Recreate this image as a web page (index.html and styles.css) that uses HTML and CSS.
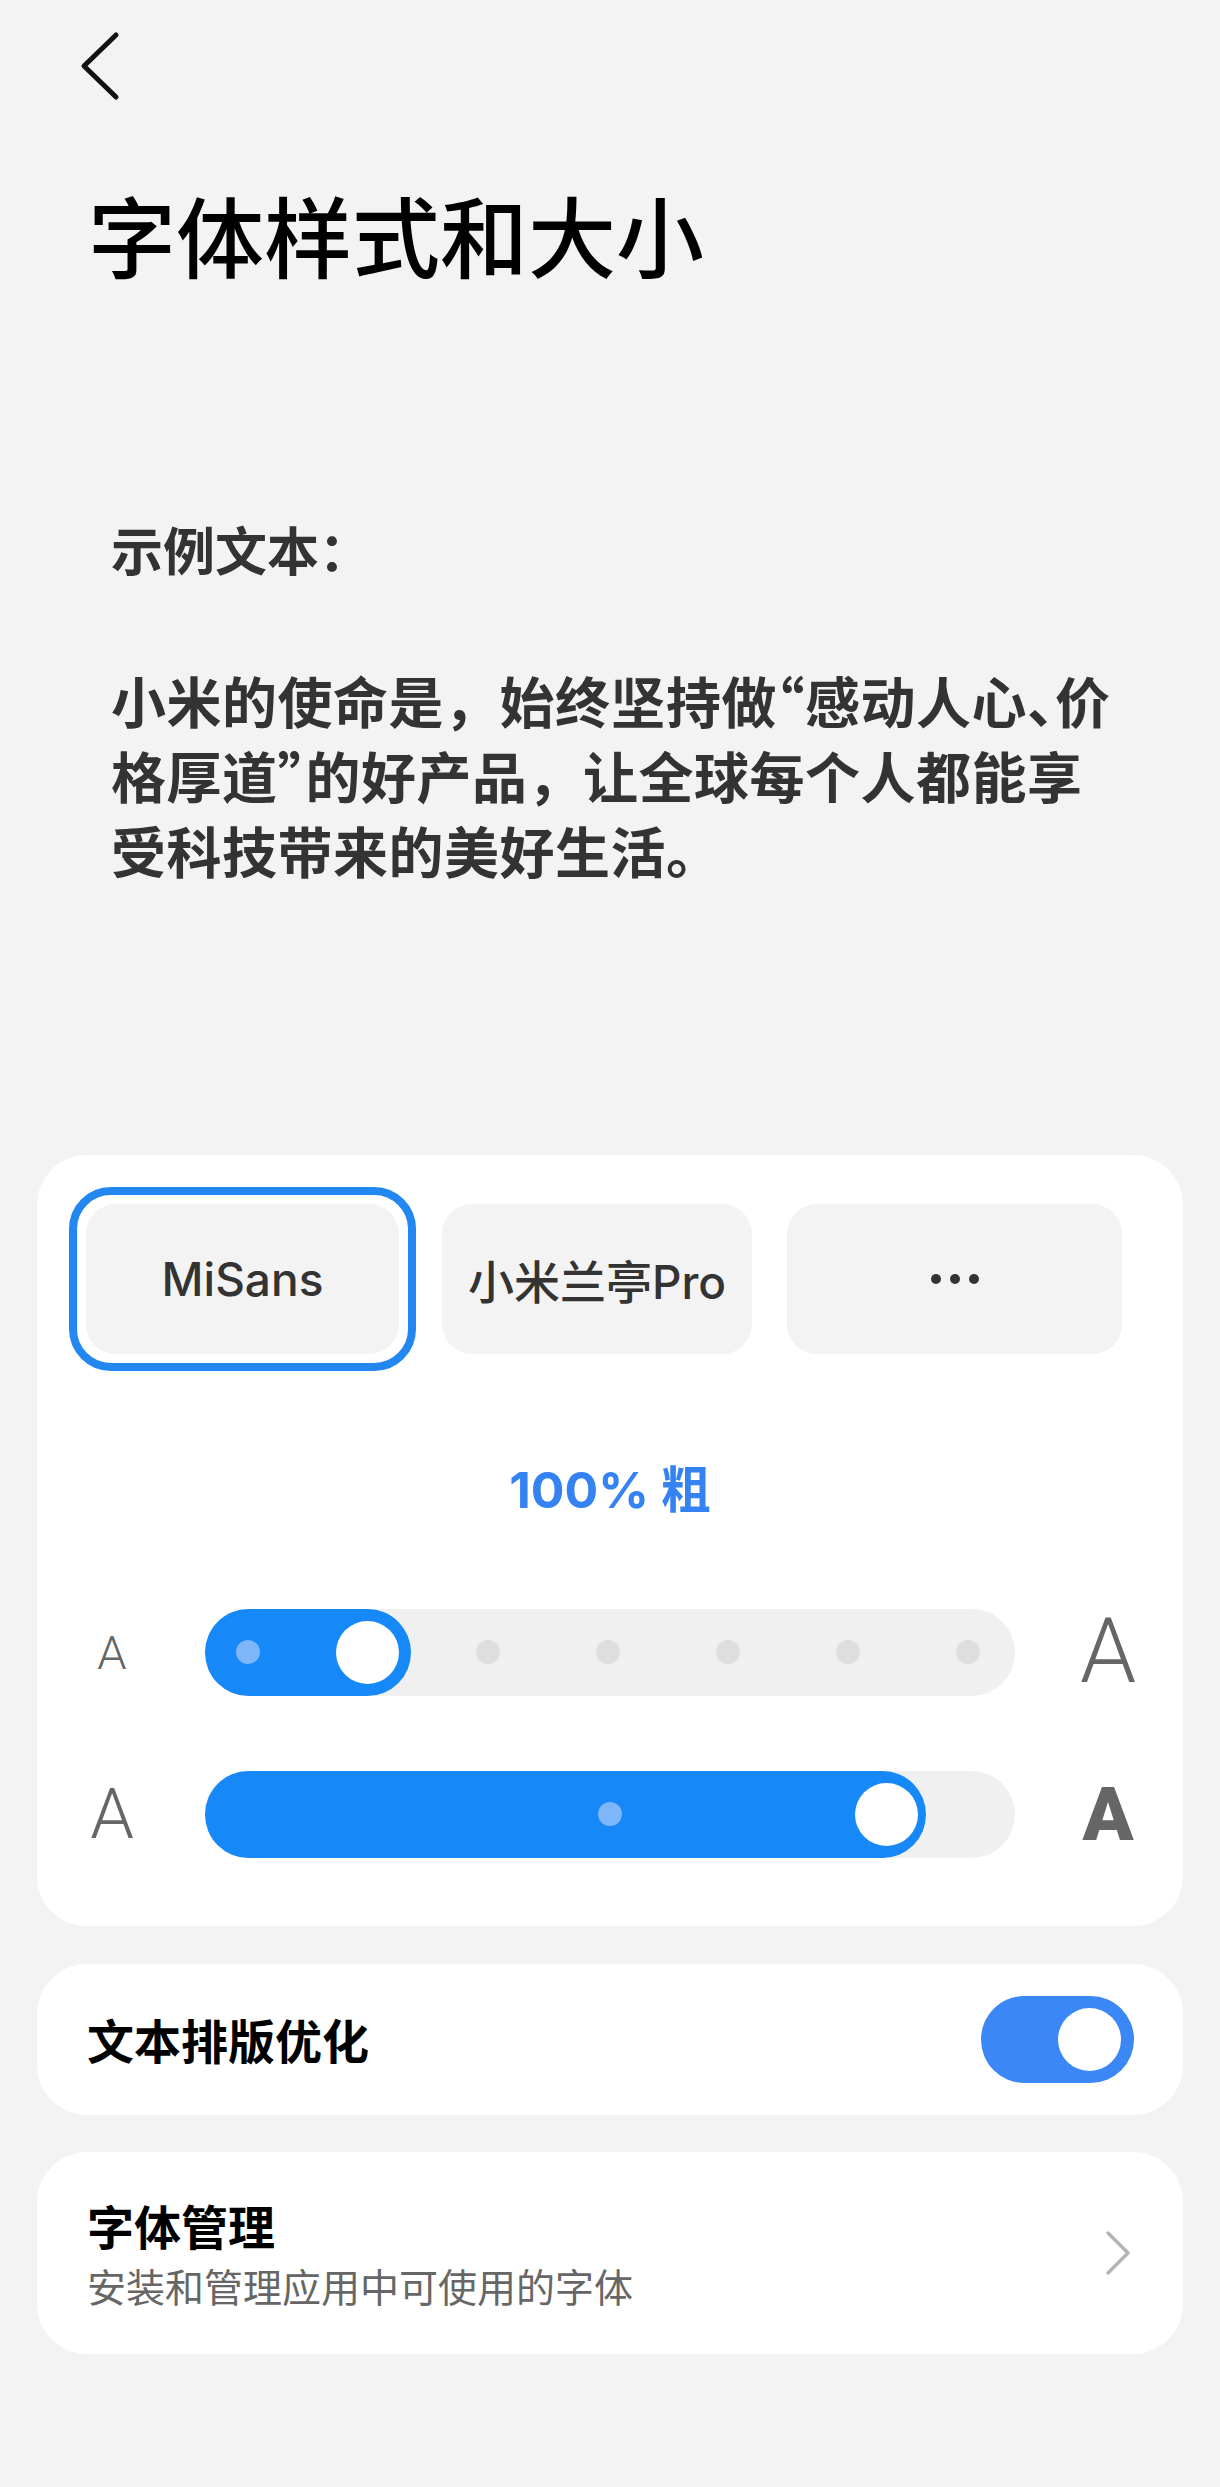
FILE: index.html
```html
<!DOCTYPE html>
<html lang="zh-CN">
<head>
    <meta charset="UTF-8">
    <meta name="viewport" content="width=device-width, initial-scale=1.0">
    <title>字体样式和大小</title>
    <link rel="stylesheet" href="styles.css">
</head>
<body>
    <!-- 顶部返回 -->
    <div class="topbar">
        <svg class="back" viewBox="0 0 42 72" width="42" height="72">
            <path d="M36 5 L4 36 L36 67" fill="none" stroke="#111" stroke-width="5" stroke-linecap="round" stroke-linejoin="round"/>
        </svg>
    </div>

    <h1 class="title">字体样式和大小</h1>

    <!-- 示例文本 -->
    <div class="sample">
        <div class="sample-label">示例文本<span class="half">：</span></div>
        <p class="sample-text">小米的使命是，始终坚持做<span class="half">“</span>感动人心<span class="half">、</span>价<br>格厚道<span class="half">”</span>的好产品，让全球每个人都能享<br>受科技带来的美好生活。</p>
    </div>

    <!-- 字体和大小设置 -->
    <div class="card font-card">
        <div class="chips">
            <div class="chip-ring">
                <div class="chip">MiSans</div>
            </div>
            <div class="chip chip-cn">小米兰亭Pro</div>
            <div class="chip chip-more">
                <span class="dot"></span><span class="dot"></span><span class="dot"></span>
            </div>
        </div>

        <div class="weight-label">100% 粗</div>

        <div class="slider-row">
            <span class="a-label a-s1">A</span>
            <div class="track">
                <div class="fill" style="width: 206px"></div>
                <div class="stops">
                    <span class="stop on"></span>
                    <span class="stop on"></span>
                    <span class="stop"></span>
                    <span class="stop"></span>
                    <span class="stop"></span>
                    <span class="stop"></span>
                    <span class="stop"></span>
                </div>
                <span class="knob" style="left: 131px"></span>
            </div>
            <span class="a-label a-l1">A</span>
        </div>

        <div class="slider-row second">
            <span class="a-label a-s2">A</span>
            <div class="track">
                <div class="fill" style="width: 721px"></div>
                <div class="stops center">
                    <span class="stop on"></span>
                </div>
                <span class="knob" style="left: 650px"></span>
            </div>
            <span class="a-label a-bold">A</span>
        </div>
    </div>

    <!-- 文本排版优化 -->
    <div class="card row-card toggle-card">
        <span class="row-title">文本排版优化</span>
        <div class="switch"><span class="switch-knob"></span></div>
    </div>

    <!-- 字体管理 -->
    <div class="card row-card manage-card">
        <div class="row-text">
            <div class="row-title">字体管理</div>
            <div class="row-sub">安装和管理应用中可使用的字体</div>
        </div>
        <svg class="arrow" viewBox="0 0 30 46" width="30" height="46">
            <path d="M5 3 L25 23 L5 43" fill="none" stroke="#b4b4b4" stroke-width="3.5" stroke-linecap="round" stroke-linejoin="round"/>
        </svg>
    </div>
</body>
</html>
```

FILE: styles.css
```css
body {
    margin: 0;
    min-height: 2487px;
    background: #f3f3f3;
    font-family: "Noto Sans CJK SC", sans-serif;
    color: #000;
}
.topbar {
    height: 72px;
    padding: 30px 0 0 80px;
}
.back {
    display: block;
}
.title {
    margin: 78px 0 0;
    padding-left: 88px;
    font-size: 88px;
    line-height: 1.2;
    font-weight: 500;
    color: #000;
}
.sample {
    margin-top: 232px;
    padding: 0 40px 0 111px;
    color: #333;
}
.half {
    font-feature-settings: "halt";
}
.sample-label {
    font-size: 52px;
    line-height: 62px;
    font-weight: 600;
}
.sample-text {
    margin: 82px 0 0;
    font-size: 55px;
    line-height: 75px;
    font-weight: 600;
    letter-spacing: 0.5px;
    white-space: nowrap;
}
.card {
    margin: 0 37px;
    background: #fff;
    border-radius: 50px;
}
.font-card {
    margin-top: 268px;
    padding: 32px 0 68px;
}
.chips {
    display: flex;
    align-items: center;
    padding-left: 32px;
    gap: 26px;
}
.chip-ring {
    border: 8px solid #2287f0;
    border-radius: 42px;
    padding: 9px;
}
.chip {
    width: 313px;
    height: 150px;
    background: #f3f3f3;
    border-radius: 30px;
    display: flex;
    align-items: center;
    justify-content: center;
    font-family: "Inter", "Noto Sans CJK SC", sans-serif;
    font-size: 46px;
    font-weight: 500;
    color: #333;
}
.chip-cn {
    width: 310px;
    font-size: 46px;
}
.chip-more {
    width: 335px;
    margin-left: 9px;
    gap: 9px;
}
.chip-more .dot {
    width: 10px;
    height: 10px;
    border-radius: 50%;
    background: #333;
}
.weight-label {
    margin-top: 88px;
    text-align: center;
    font-family: "Inter", "Noto Sans CJK SC", sans-serif;
    font-size: 50px;
    line-height: 62px;
    font-weight: 700;
    color: #3583f2;
}
.slider-row {
    display: flex;
    align-items: center;
    height: 87px;
    margin-top: 88px;
    gap: 18px;
}
.slider-row.second {
    margin-top: 75px;
}
.a-label {
    width: 150px;
    text-align: center;
    font-family: "Roboto", sans-serif;
    font-weight: 300;
    line-height: 1;
    color: #666;
}
.a-s1 {
    font-size: 47px;
}
.a-l1 {
    font-size: 90px;
}
.a-s2 {
    font-size: 70px;
}
.a-bold {
    font-size: 75px;
    font-weight: 900;
}
.track {
    position: relative;
    width: 810px;
    height: 87px;
    border-radius: 44px;
    background: #f0f0f0;
}
.fill {
    height: 100%;
    border-radius: 44px;
    background: #1788f8;
}
.stops {
    position: absolute;
    top: 0;
    bottom: 0;
    left: 31px;
    right: 35px;
    display: flex;
    align-items: center;
    justify-content: space-between;
}
.stops.center {
    left: 0;
    right: 0;
    justify-content: center;
}
.stop {
    width: 24px;
    height: 24px;
    border-radius: 50%;
    background: #dedede;
}
.stop.on {
    background: #7db7fa;
}
.knob {
    position: absolute;
    top: 12px;
    width: 63px;
    height: 63px;
    border-radius: 50%;
    background: #fff;
}
.row-card {
    display: flex;
    align-items: center;
    justify-content: space-between;
    padding: 0 49px 0 50px;
}
.toggle-card {
    margin-top: 38px;
    height: 151px;
}
.row-title {
    font-size: 47px;
    line-height: 60px;
    font-weight: 700;
}
.switch {
    position: relative;
    width: 153px;
    height: 87px;
    border-radius: 44px;
    background: #3b87f6;
}
.switch-knob {
    position: absolute;
    top: 12px;
    right: 13px;
    width: 63px;
    height: 63px;
    border-radius: 50%;
    background: #fff;
}
.manage-card {
    margin-top: 37px;
    height: 202px;
    padding-right: 50px;
}
.row-sub {
    margin-top: 5px;
    font-size: 39px;
    line-height: 50px;
    color: #666;
}
.arrow {
    display: block;
}
```
